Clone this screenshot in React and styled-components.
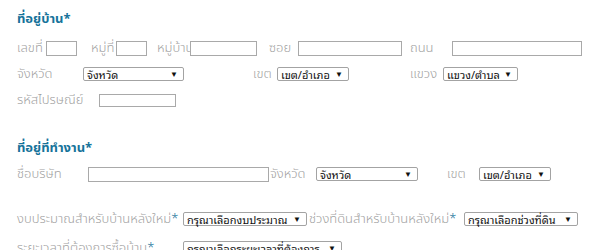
import React from 'react';
import styled, { createGlobalStyle } from 'styled-components';

const GlobalStyle = createGlobalStyle`
  body {
    margin: 0;
    background: #fff;
    font-family: "Noto Sans Thai", "Noto Sans", "DejaVu Sans", sans-serif;
  }
`;

const Page = styled.div`
  width: 600px;
  height: 250px;
  overflow: hidden;
  padding-left: 17px;
  box-sizing: border-box;
`;

const Heading = styled.h2`
  margin: ${(props) => props.top}px 0 0;
  height: 22px;
  line-height: 22px;
  font-size: 13px;
  font-weight: 700;
  color: #16739a;
`;

const Row = styled.div`
  display: flex;
  align-items: center;
  height: 26px;
  margin-top: ${(props) => props.top || 0}px;
`;

const Label = styled.span`
  flex: none;
  width: ${(props) => props.w}px;
  margin-left: ${(props) => props.gap || 0}px;
  font-size: 13px;
  font-weight: 300;
  color: #a2a2a2;
  white-space: nowrap;
`;

const Star = styled.span`
  color: #16739a;
`;

const TextBox = styled.input`
  flex: none;
  box-sizing: border-box;
  width: ${(props) => props.w}px;
  height: ${(props) => props.h || 15}px;
  margin: 0;
  padding: 0 2px;
  border: 1px solid #a9a9a9;
  background: #fff;
  outline: none;
`;

const SelectBox = styled.div`
  flex: none;
  box-sizing: border-box;
  display: flex;
  align-items: center;
  justify-content: space-between;
  width: ${(props) => props.w}px;
  height: 14px;
  padding: 0 5px 0 3px;
  border: 1px solid #a3a3a3;
  border-radius: 2px;
  background: #fff;
  font-family: "Noto Sans Thai Looped", "Tahoma", "Noto Sans Thai", sans-serif;
  font-size: 11px;
  line-height: 12px;
  color: #111;
  white-space: nowrap;
`;

const Arrow = styled.span`
  font-size: 8px;
  line-height: 1;
  margin-left: 4px;
`;

const Select = ({ w, children }) => (
  <SelectBox w={w}>
    <span>{children}</span>
    <Arrow>▼</Arrow>
  </SelectBox>
);

const App = () => {
  return (
    <>
      <GlobalStyle />
      <Page>
        <Heading top={8}>ที่อยู่บ้าน<Star>*</Star></Heading>
        <Row top={5}>
          <Label w={29}>เลขที่</Label>
          <TextBox w={31} />
          <Label w={25} gap={14}>หมู่ที่</Label>
          <TextBox w={31} />
          <Label w={33} gap={10}>หมู่บ้าน</Label>
          <TextBox w={67} />
          <Label w={29} gap={12}>ซอย</Label>
          <TextBox w={104} />
          <Label w={42} gap={8}>ถนน</Label>
          <TextBox w={130} />
        </Row>
        <Row>
          <Label w={66}>จังหวัด</Label>
          <Select w={101}>จังหวัด</Select>
          <Label w={24} gap={69}>เขต</Label>
          <Select w={72}>เขต/อำเภอ</Select>
          <Label w={33} gap={61}>แขวง</Label>
          <Select w={75}>แขวง/ตำบล</Select>
        </Row>
        <Row>
          <Label w={82}>รหัสไปรษณีย์</Label>
          <TextBox w={77} h={13} />
        </Row>

        <Heading top={24}>ที่อยู่ที่ทำงาน<Star>*</Star></Heading>
        <Row top={2}>
          <Label w={71}>ชื่อบริษัท</Label>
          <TextBox w={181} />
          <Label w={46} gap={1}>จังหวัด</Label>
          <Select w={102}>จังหวัด</Select>
          <Label w={32} gap={29}>เขต</Label>
          <Select w={72}>เขต/อำเภอ</Select>
        </Row>
        <Row top={19}>
          <Label w={166}>งบประมาณสำหรับบ้านหลังใหม่<Star>*</Star></Label>
          <Select w={124}>กรุณาเลือกงบประมาณ</Select>
          <Label w={155} gap={2}>ช่วงที่ดินสำหรับบ้านหลังใหม่<Star>*</Star></Label>
          <Select w={114}>กรุณาเลือกช่วงที่ดิน</Select>
        </Row>
        <Row top={3}>
          <Label w={166}>ระยะเวลาที่ต้องการซื้อบ้าน<Star>*</Star></Label>
          <Select w={159}>กรุณาเลือกระยะเวลาที่ต้องการ</Select>
        </Row>
      </Page>
    </>
  );
};

export default App;
